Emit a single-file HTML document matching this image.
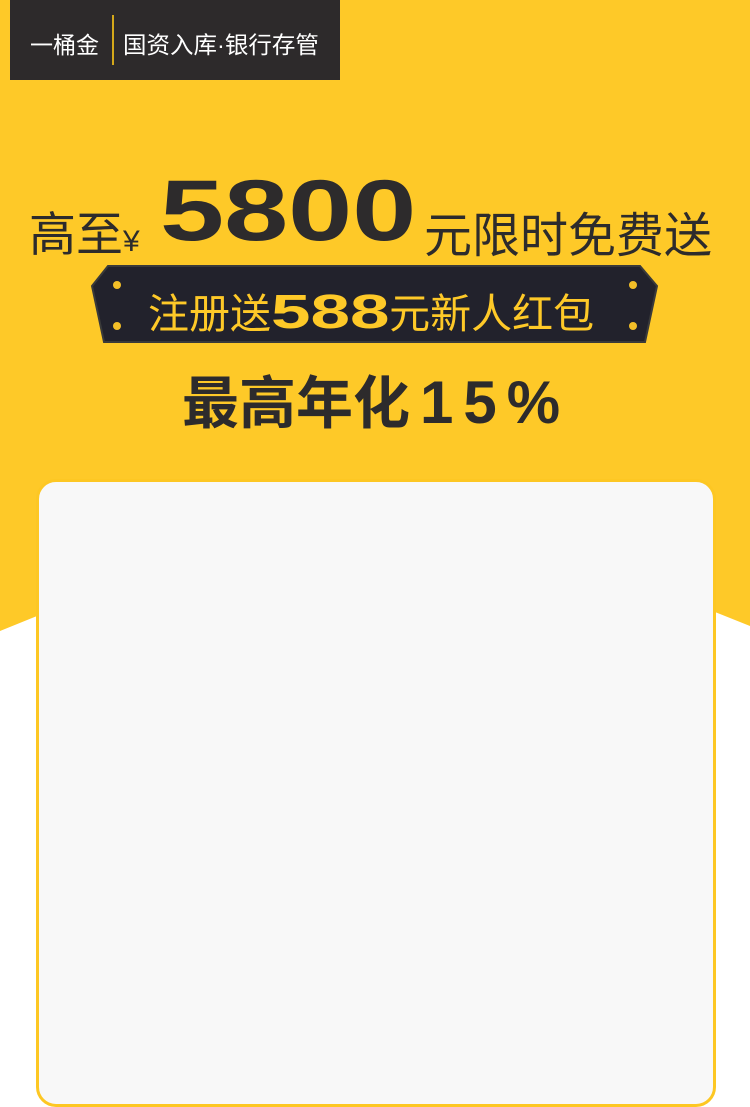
<!DOCTYPE html>
<html><head><meta charset="utf-8"><style>
body{margin:0;width:750px;height:1107px;position:relative;overflow:hidden;background:#fff;font-family:"Liberation Sans","Noto Sans CJK SC",sans-serif}
.bg{position:absolute;left:0;top:0}
.logo{position:absolute;left:10px;top:0;width:330px;height:80px;background:#2d2a2b;color:#fff}
.card{position:absolute;left:36px;top:479px;width:674px;height:622px;background:#f8f8f8;border:3px solid #fdc723;border-radius:20px}
.t{position:absolute;color:#2d2b2c;white-space:nowrap}
</style></head><body>
<svg class="bg" width="750" height="1107">
<polygon points="0,0 750,0 750,626 715,612 37,616 0,631" fill="#fec928"/>
<polygon points="108,266 640,266 657,286 645,342 104,342 92,286" fill="#22222c" stroke="#3a3a3a" stroke-width="2"/>
<circle cx="117" cy="285" r="4" fill="#f3bf28"/><circle cx="117" cy="326" r="4" fill="#f3bf28"/>
<circle cx="633" cy="285" r="4" fill="#f3bf28"/><circle cx="633" cy="326" r="4" fill="#f3bf28"/>
</svg>
<div class="logo">
<div style="position:absolute;left:20px;top:26px;font-size:23px">一桶金</div>
<div style="position:absolute;left:102px;top:15px;width:2px;height:50px;background:#d4a81a"></div>
<div style="position:absolute;left:113px;top:26px;font-size:23.5px">国资入库·银行存管</div>
</div>
<div class="t" style="left:29px;top:196px;font-size:47px">高至<span style="font-size:30px">¥</span></div>
<div class="t" style="left:160px;top:162px;font-size:86px;font-weight:bold;transform:scaleX(1.34);transform-origin:left">5800</div>
<div class="t" style="left:424px;top:196px;font-size:48px">元限时免费送</div>
<div class="t" style="left:148px;top:280px;font-size:41px;color:#fec928">注册送<b style="font-size:48px;display:inline-block;transform:scaleX(1.48);transform-origin:left;margin-right:38px;line-height:40px">588</b>元新人红包</div>
<div class="t" style="left:182px;top:358px;font-size:57px;font-weight:bold">最高年化<span style="font-size:60px;letter-spacing:10px;margin-left:10px">15%</span></div>
<div class="card"></div>
</body></html>
